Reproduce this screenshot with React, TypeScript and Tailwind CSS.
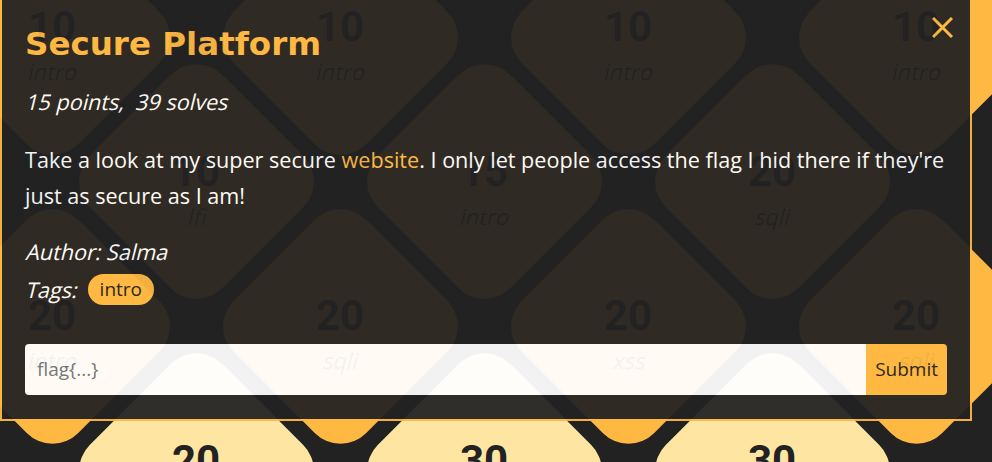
import clsx from "clsx";
import type { ReactNode } from "react";

type Tile = { points: number; tag: string };

const rows: Tile[][] = [
  [
    { points: 10, tag: "intro" },
    { points: 10, tag: "intro" },
    { points: 10, tag: "intro" },
    { points: 10, tag: "intro" },
  ],
  [
    { points: 10, tag: "lfi" },
    { points: 15, tag: "intro" },
    { points: 20, tag: "sqli" },
  ],
  [
    { points: 20, tag: "intro" },
    { points: 20, tag: "sqli" },
    { points: 20, tag: "xss" },
    { points: 20, tag: "sqli" },
  ],
  [
    { points: 20, tag: "web" },
    { points: 30, tag: "crypto" },
    { points: 30, tag: "pwn" },
  ],
];

// the page fakes its italics by slanting the regular face
function Slanted({ children }: { children: ReactNode }) {
  return <span className="inline-block origin-[50%_75%] skew-x-[-14deg] whitespace-pre">{children}</span>;
}

function ChallengeTile({ tile, light }: { tile: Tile; light: boolean }) {
  return (
    <div className="grid w-[288px] shrink-0 place-items-center">
      <div
        className={clsx(
          "size-[187px] rotate-45 rounded-[36px] [grid-area:1/1]",
          light ? "bg-[#ffe5a2]" : "bg-[#ffb942]"
        )}
      />
      <div className="flex translate-y-[9px] flex-col items-center text-[#222] [grid-area:1/1]">
        <span className="font-['Roboto',sans-serif] text-[42px] font-bold leading-[42px]">{tile.points}</span>
        <span className="mt-2 text-[22px] leading-[30px]">
          <Slanted>{tile.tag}</Slanted>
        </span>
      </div>
    </div>
  );
}

export default function App() {
  return (
    <div className="relative h-[462px] w-full overflow-hidden bg-[#222] font-['Open_Sans',sans-serif]">
      {/* challenge board */}
      <div className="-ml-[92px] -mt-[35px] flex flex-col">
        {rows.map((row, i) => (
          <div key={i} className={clsx("flex h-[144.5px] items-center", i % 2 === 1 && "pl-[144px]")}>
            {row.map((tile, j) => (
              <ChallengeTile key={j} tile={tile} light={i === 3} />
            ))}
          </div>
        ))}
      </div>

      {/* challenge modal */}
      <div className="absolute left-0 top-0 w-[972px] border-2 border-t-0 border-[#ffb942] bg-[#232323] px-[23px] pb-6 pt-[25px] text-white opacity-[0.94]">
        <button className="absolute right-[17px] top-[17px] text-[#ffb942]">
          <svg width="21" height="21" viewBox="0 0 21 21" fill="none" stroke="currentColor" strokeWidth="3">
            <path d="M1 1 20 20M20 1 1 20" />
          </svg>
        </button>

        <h2 className="font-['DejaVu_Sans',sans-serif] text-[32.5px] font-bold leading-[38px] text-[#ffb942]">
          Secure Platform
        </h2>
        <p className="mt-[24px] text-[21.6px] leading-[30px]">
          <Slanted>15 points,  39 solves</Slanted>
        </p>
        <p className="mt-[25px] text-[21.6px] leading-[36px]">
          Take a look at my super secure <span className="text-[#ffb942]">website</span>. I only let people access the
          flag I hid there if they're just as secure as I am!
        </p>
        <p className="mt-[23px] text-[21.6px] leading-[30px]">
          <Slanted>Author: Salma</Slanted>
        </p>
        <div className="mt-[7px] flex h-[31px] items-center gap-[11px]">
          <span className="text-[21.6px] leading-[30px]">
            <Slanted>Tags:</Slanted>
          </span>
          <span className="flex h-[31px] items-center rounded-full bg-[#ffb942] px-[12px] text-[19px] text-[#222]">
            intro
          </span>
        </div>

        <div className="mt-[39px] flex h-[51px]">
          <input
            placeholder="flag{...}"
            className="min-w-0 flex-1 rounded-l-[4px] bg-white px-[12px] text-[19px] text-[#222] outline-none placeholder:text-[#6c757d]"
          />
          <button className="rounded-r-[4px] bg-[#ffb942] px-[9px] text-[19px] text-[#222]">Submit</button>
        </div>
      </div>
    </div>
  );
}
